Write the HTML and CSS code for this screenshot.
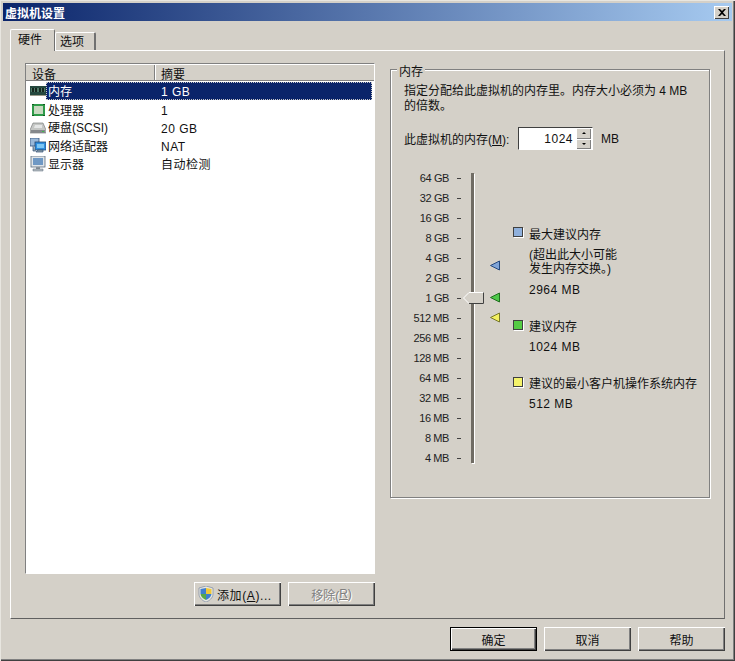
FILE: index.html
```html
<!DOCTYPE html>
<html lang="zh-CN">
<head>
  <meta charset="UTF-8">
  <title>虚拟机设置</title>
  <link rel="stylesheet" href="styles.css">
</head>
<body>
  <div class="window">
    <div class="titlebar">
      <span class="title">虚拟机设置</span>
      <span class="close">
        <svg width="8" height="7" viewBox="0 0 8 7"><path d="M0 0h2l2 2 2-2h2L5 3.500 8 7H6L4 5 2 7H0l3-3.500z" fill="#000"/></svg>
      </span>
    </div>

    <div class="tabs">
      <div class="tab active">硬件</div>
      <div class="tab">选项</div>
    </div>

    <div class="panel">
      <div class="left">
        <div class="list">
          <div class="list-header">
            <span class="col-name">设备</span>
            <span class="col-summary">摘要</span>
          </div>
          <div class="row row-first">
            <svg class="icon" viewBox="0 0 16 16"><rect x="0" y="3" width="16" height="10" fill="#24483e"/><rect x="1" y="5" width="14" height="4" fill="#4f7a68"/><path d="M2 5h2v4H2zM5 5h2v4H5zM9 5h2v4H9zM12 5h2v4h-2z" fill="#16261f"/><path d="M0 12h16v1H0z" fill="#9a9a8a"/></svg>
            <span class="name selected">内存</span>
            <span class="summary">1 GB</span>
          </div>
          <div class="row">
            <svg class="icon" viewBox="0 0 16 16"><rect x="2" y="2" width="13" height="12" fill="#2e9a48"/><rect x="4" y="4" width="9" height="8" fill="#c8d8c0"/><path d="M2 2h2v1H2zM13 2h2v1h-2zM2 13h2v1H2zM13 13h2v1h-2z" fill="#0f5a20"/></svg>
            <span class="name">处理器</span>
            <span class="summary">1</span>
          </div>
          <div class="row">
            <svg class="icon" viewBox="0 0 16 16"><path d="M3 3h10l3 7v3H0v-3z" fill="#c4c6c4" stroke="#6c6e70" stroke-width=".6"/><path d="M1 10h14v3H1z" fill="#85888c"/><path d="M5 5h7v3H4z" fill="#e4e6e6"/><path d="M12 11h2v1h-2z" fill="#3fbb4a"/></svg>
            <span class="name name-mixed">硬盘(SCSI)</span>
            <span class="summary">20 GB</span>
          </div>
          <div class="row">
            <svg class="icon" viewBox="0 0 16 16"><rect x="0" y="0" width="9" height="8" fill="#9ab8d8" stroke="#33507a" stroke-width=".8"/><rect x="5" y="4" width="11" height="8" fill="#2f8fe0" stroke="#23466e" stroke-width=".8"/><rect x="7" y="6" width="7" height="4" fill="#7cc6f4"/><path d="M3 8v5h3M8 12h5v2H6z" fill="#8ea0a8" stroke="#33507a" stroke-width=".7"/></svg>
            <span class="name">网络适配器</span>
            <span class="summary">NAT</span>
          </div>
          <div class="row">
            <svg class="icon" viewBox="0 0 16 16"><rect x="1" y="0" width="14" height="11" fill="#e0e4e8" stroke="#5a6a7a" stroke-width=".8"/><rect x="3" y="2" width="10" height="7" fill="#6f98c4"/><path d="M6 11h4v2H6z" fill="#8a929a"/><path d="M3 13h10v2H3z" fill="#b8bec4" stroke="#5a6a7a" stroke-width=".5"/></svg>
            <span class="name">显示器</span>
            <span class="summary">自动检测</span>
          </div>
        </div>
        <div class="list-buttons">
          <button class="btn btn-add">
            <svg width="16" height="16" viewBox="0 0 16 16"><path d="M8 0l7 2v6c0 4-4 7-7 8-3-1-7-4-7-8V2z" fill="#e8e8e0" stroke="#6a7a9a" stroke-width=".6"/><path d="M8 2v6H2.500V3z" fill="#3f7fd0"/><path d="M8 8h5.500c-.3 2.800-3 5-5.500 6z" fill="#3f7fd0"/><path d="M8 2l5.500 1v5H8z" fill="#f0c838"/><path d="M8 8v6C5.500 13 2.800 10.800 2.500 8z" fill="#58a848"/></svg>
            <span class="btn-add-text">添加(<u>A</u>)...</span>
          </button>
          <button class="btn disabled">移除(<u>R</u>)</button>
        </div>
      </div>

      <div class="group">
        <span class="group-title">内存</span>
        <p class="desc">指定分配给此虚拟机的内存里。内存大小必须为 4 MB<br>的倍数。</p>
        <div class="mem-row">
          <span class="mem-label">此虚拟机的内存(<u>M</u>):</span>
          <div class="spin">
            <span class="spin-value">1024</span>
            <div class="spin-arrows">
              <span class="spin-btn"><i class="up"></i></span>
              <span class="spin-btn"><i class="down"></i></span>
            </div>
          </div>
          <span class="unit">MB</span>
        </div>

        <div class="slider-area">
          <div class="scale">
            <div class="mark"><span>64 GB</span><i></i></div>
            <div class="mark"><span>32 GB</span><i></i></div>
            <div class="mark"><span>16 GB</span><i></i></div>
            <div class="mark"><span>8 GB</span><i></i></div>
            <div class="mark"><span>4 GB</span><i></i></div>
            <div class="mark"><span>2 GB</span><i></i></div>
            <div class="mark"><span>1 GB</span><i></i></div>
            <div class="mark"><span>512 MB</span><i></i></div>
            <div class="mark"><span>256 MB</span><i></i></div>
            <div class="mark"><span>128 MB</span><i></i></div>
            <div class="mark"><span>64 MB</span><i></i></div>
            <div class="mark"><span>32 MB</span><i></i></div>
            <div class="mark"><span>16 MB</span><i></i></div>
            <div class="mark"><span>8 MB</span><i></i></div>
            <div class="mark"><span>4 MB</span><i></i></div>
          </div>
          <div class="track"></div>

          <svg class="thumb" width="21" height="12" viewBox="0 0 21 12">
            <path d="M.5 6L6 .5h14.500v11H6z" fill="#d4d0c8" stroke="#fff"/>
            <path d="M6 11.500h14.500V.5" fill="none" stroke="#404040"/>
          </svg>
          <svg class="pointer pointer-max" width="11" height="11" viewBox="0 0 11 11"><path d="M.5 5.500L9.500 1v9z" fill="#7fa4d8" stroke="#24487e"/></svg>
          <svg class="pointer pointer-rec" width="11" height="11" viewBox="0 0 11 11"><path d="M.5 5.500L9.500 1v9z" fill="#4fc84a" stroke="#1f6e1f"/></svg>
          <svg class="pointer pointer-min" width="11" height="11" viewBox="0 0 11 11"><path d="M.5 5.500L9.500 1v9z" fill="#f2f060" stroke="#77772a"/></svg>

          <div class="legend">
            <div class="legend-item">
              <div class="legend-head"><i class="swatch blue"></i><span>最大建议内存</span></div>
              <p class="legend-note">(超出此大小可能<br>发生内存交换。)</p>
              <p class="legend-value">2964 MB</p>
            </div>
            <div class="legend-item">
              <div class="legend-head"><i class="swatch green"></i><span>建议内存</span></div>
              <p class="legend-value">1024 MB</p>
            </div>
            <div class="legend-item">
              <div class="legend-head"><i class="swatch yellow"></i><span>建议的最小客户机操作系统内存</span></div>
              <p class="legend-value">512 MB</p>
            </div>
          </div>
        </div>
      </div>
    </div>

    <div class="footer">
      <button class="btn default">确定</button>
      <button class="btn">取消</button>
      <button class="btn">帮助</button>
    </div>
  </div>
</body>
</html>
```

FILE: styles.css
```css
* {
  box-sizing: border-box;
}

html, body {
  margin: 0;
  height: 100%;
}

body {
  background-color: #d4d0c8;
  color: #111;
  font-family: "Liberation Sans", "Noto Sans CJK SC", sans-serif;
  font-size: 12px;
  overflow: hidden;
}

p {
  margin: 0;
}

.window {
  width: 735px;
  height: 661px;
  padding: 3px;
  background-color: #d4d0c8;
  box-shadow: inset 1px 1px 0 #e8e6e0, inset -1px -1px 0 #404040, inset -2px -2px 0 #808080;
}

.titlebar {
  display: flex;
  justify-content: space-between;
  align-items: center;
  width: 729px;
  height: 18px;
  padding: 0 2px;
  background: linear-gradient(to right, #0a246a, #a6caf0);
}

.title {
  color: #ffffff;
  font-weight: bold;
  font-size: 12px;
}

.close {
  display: flex;
  align-items: center;
  justify-content: center;
  width: 15px;
  height: 13px;
  margin-right: 1px;
  background-color: #d4d0c8;
  box-shadow: inset 1px 1px 0 #fff, inset -1px -1px 0 #404040;
}

/* tabs */
.tabs {
  display: flex;
  align-items: flex-end;
  height: 29px;
  margin-left: 7px;
}

.tab {
  width: 41px;
  height: 18px;
  padding-left: 4px;
  line-height: 19px;
  border-top: 1px solid #fff;
  border-left: 1px solid #fff;
  border-right: 2px solid #707070;
  border-radius: 2px 2px 0 0;
}

.tab.active {
  position: relative;
  z-index: 1;
  width: 45px;
  height: 22px;
  margin-bottom: -1px;
  padding-left: 7px;
  line-height: 20px;
  background-color: #d4d0c8;
  border-right-width: 1px;
}

.panel {
  display: flex;
  align-items: flex-start;
  width: 715px;
  height: 569px;
  margin-left: 7px;
  padding: 12px 0 0 14px;
  border-top: 1px solid #fff;
  border-left: 1px solid #fff;
  border-right: 1px solid #707070;
  border-bottom: 1px solid #606060;
}

/* device list */
.left {
  width: 350px;
}

.list {
  height: 511px;
  background-color: #ffffff;
  border: 1px solid;
  border-color: #808080 #fff #fff #808080;
}

.list-header {
  display: flex;
  height: 17px;
  margin-bottom: 1px;
  line-height: 20px;
  background-color: #d4d0c8;
  border-top: 1px solid #fff;
  border-bottom: 1px solid #808080;
  overflow: hidden;
}

.col-name {
  width: 129px;
  padding-left: 6px;
  border-right: 1px solid #808080;
  box-shadow: 1px 0 0 #fff;
}

.col-summary {
  padding-left: 6px;
}

.row {
  display: flex;
  align-items: flex-start;
  height: 18px;
}

.row-first {
  margin-bottom: 1px;
}

.icon {
  flex: none;
  width: 16px;
  height: 16px;
  margin: 1px 0 0 4px;
}

.name {
  width: 115px;
  height: 18px;
  padding-left: 2px;
  line-height: 20px;
}

.name-mixed {
  line-height: 18px;
}

.name.selected {
  width: 326px;
  margin-right: -211px;
  background-color: #0a246a;
  color: #ffffff;
  outline: 1px dotted #c8c8c8;
  outline-offset: -1px;
}

.summary {
  position: relative;
  line-height: 20px;
  letter-spacing: .5px;
}

.row .selected + .summary {
  color: #ffffff;
}

.list-buttons {
  display: flex;
  justify-content: flex-end;
  gap: 7px;
  margin-top: 8px;
}

/* buttons */
.btn {
  display: flex;
  align-items: center;
  justify-content: center;
  width: 87px;
  height: 24px;
  padding: 0;
  background-color: #d4d0c8;
  color: #111;
  font: inherit;
  border: none;
  box-shadow: inset 1px 1px 0 #fff, inset -1px -1px 0 #404040, inset -2px -2px 0 #808080;
}

.btn-add {
  gap: 3px;
  justify-content: flex-start;
  padding-left: 4px;
}

.btn-add-text {
  letter-spacing: .6px;
}

.btn.disabled {
  color: #808080;
  text-shadow: 1px 1px 0 #fff;
}

.btn.default {
  border: 1px solid #000;
}

/* memory group */
.group {
  position: relative;
  width: 320px;
  height: 429px;
  margin-top: 6px;
  margin-left: 15px;
  padding: 14px 13px 0;
  border: 1px solid #808080;
  box-shadow: 1px 1px 0 #fff, inset 1px 1px 0 #fff;
}

.group-title {
  position: absolute;
  top: -5px;
  left: 6px;
  padding: 0 2px;
  line-height: 14px;
  background-color: #d4d0c8;
}

.desc {
  line-height: 15px;
}

.mem-row {
  display: flex;
  align-items: center;
  height: 23px;
  margin-top: 13px;
}

.mem-label {
  width: 114px;
}

.spin {
  display: flex;
  align-items: center;
  width: 75px;
  height: 23px;
  background-color: #ffffff;
  border: 1px solid;
  border-color: #404040 #fff #fff #404040;
}

.spin-value {
  width: 54px;
  text-align: right;
  letter-spacing: .5px;
}

.spin-arrows {
  display: flex;
  flex-direction: column;
  margin-left: 3px;
}

.spin-btn {
  display: flex;
  align-items: center;
  justify-content: center;
  width: 15px;
  height: 10.500px;
  background-color: #d4d0c8;
  box-shadow: inset 1px 1px 0 #fff, inset -1px -1px 0 #808080;
}

.spin-btn i {
  width: 0;
  height: 0;
  border-left: 2px solid transparent;
  border-right: 2px solid transparent;
}

.spin-btn .up {
  border-bottom: 2px solid #000;
}

.spin-btn .down {
  border-top: 2px solid #000;
}

.unit {
  margin-left: 8px;
}

/* slider */
.slider-area {
  position: relative;
  display: flex;
  margin-top: 17px;
}

.scale {
  flex: none;
  width: 57px;
  margin-top: 1px;
  font-size: 11px;
  letter-spacing: -.4px;
  color: #222;
}

.mark {
  display: flex;
  align-items: center;
  justify-content: flex-end;
  gap: 8px;
  height: 20px;
  white-space: nowrap;
}

.mark i {
  width: 4px;
  height: 1px;
  background-color: #404040;
}

.track {
  flex: none;
  width: 3px;
  height: 290px;
  margin-top: 6px;
  margin-left: 10px;
  background-color: #706c64;
  box-shadow: 1px 1px 0 #fff;
}

.thumb {
  position: absolute;
  top: 125px;
  left: 59px;
}

.pointer {
  position: absolute;
  left: 86px;
}

.pointer-max {
  top: 93px;
}

.pointer-rec {
  top: 125px;
}

.pointer-min {
  top: 145px;
}

.legend {
  flex: none;
  margin-top: 59px;
  margin-left: 39px;
}

.legend-item {
  margin-bottom: 21px;
}

.legend-head {
  display: flex;
  align-items: center;
  gap: 6px;
  height: 14px;
  white-space: nowrap;
}

.swatch {
  flex: none;
  width: 10px;
  height: 10px;
  border: 1px solid #404040;
  box-shadow: 1px 1px 0 #fff;
}

.swatch.blue {
  margin-top: -2px;
  background-color: #8fb0dc;
}

.swatch.green {
  background-color: #55cc44;
}

.swatch.yellow {
  background-color: #f4f36a;
}

.legend-note {
  margin-top: 8px;
  margin-left: 16px;
  line-height: 14px;
}

.legend-value {
  margin-top: 7px;
  margin-left: 16px;
  line-height: 14px;
  letter-spacing: .5px;
}

.legend-head + .legend-value {
  margin-top: 8px;
}

/* footer */
.footer {
  display: flex;
  justify-content: flex-end;
  gap: 7px;
  margin-top: 8px;
  padding-right: 7px;
}
```
